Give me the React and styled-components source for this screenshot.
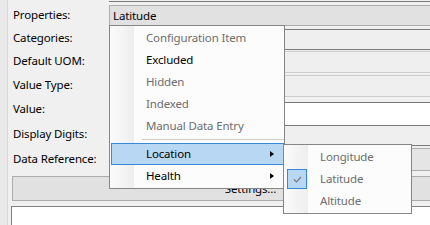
import React from 'react'
import styled, { createGlobalStyle } from 'styled-components'

const Global = createGlobalStyle`
  body {
    margin: 0;
    overflow: hidden;
    background: #f0f0f0;
    font-family: "Noto Sans", "Open Sans", sans-serif;
    font-size: 11.5px;
    letter-spacing: -0.15px;
    color: #000;
  }
`

const Root = styled.div`
  position: relative;
  display: flex;
  width: 430px;
  height: 225px;
  overflow: hidden;
  background: #f0f0f0;
`
const Strip = styled.div`
  width: 7px;
  flex: none;
  background: #e9e9e9;
  border-right: 1px solid #d9d9d9;
`
const Panel = styled.div`
  flex: 1;
  min-width: 0;
  display: flex;
  flex-direction: column;
  padding-left: 5px;
`
const Row = styled.div`
  display: grid;
  grid-template-columns: 96px 1fr;
  align-items: center;
  height: ${p => p.$h}px;
  margin-top: ${p => p.$mt}px;
`
const Label = styled.span`
  white-space: nowrap;
  line-height: 14px;
  margin-bottom: ${p => p.$lift * 2}px;
`
const fieldKinds = {
  prev: 'border-bottom: 1px solid #7a7a7a; background: #efefef;',
  combo: 'border: 1px solid #adadad; background: #e1e1e1;',
  dis: 'border: 1px solid #7a7a7a; background: #efefef;',
  disCombo: 'border: 1px solid #cccccc; background: #efefef;',
  text: 'border: 1px solid #7a7a7a; background: #fff;',
  combo2: 'border: 1px solid #adadad; background: #e5e5e5;',
}
/* fields run on past the right edge of the window, so no right border */
const Field = styled.div`
  box-sizing: border-box;
  height: 100%;
  display: flex;
  align-items: center;
  padding-left: 3px;
  ${p => fieldKinds[p.$kind]}
  border-right: none;
`
const Button = styled.div`
  box-sizing: border-box;
  margin: 5px 0 0 -1px;
  height: 25px;
  padding: 0 0 1px 58px;
  border: 1px solid #adadad;
  border-right: none;
  background: #e1e1e1;
  display: flex;
  align-items: center;
  justify-content: center;
`
const Box = styled.div`
  margin: 5px 0 0 -2px;
  flex: 1;
  border: 1px solid #828282;
  border-width: 1px 0 0 1px;
  background: #fff;
`

const Menu = styled.div`
  position: absolute;
  box-sizing: border-box;
  left: ${p => p.$x}px;
  top: ${p => p.$y}px;
  width: ${p => p.$w}px;
  padding: 1px 0 1px 1px;
  border: 1px solid #868686;
  background: linear-gradient(to right, #fbfbfb 0, #eeeeee 24px, #fcfcfc 24px);
`
const SubMenu = styled(Menu)`
  left: 100%;
  top: 0;
  padding: 1px;
`
const Item = styled.div`
  position: relative;
  box-sizing: border-box;
  height: 22px;
  display: flex;
  align-items: center;
  padding: 0 0 1px 34px;
  color: ${p => (p.$off ? '#6d6d6d' : '#000')};
  border: 1px solid ${p => (p.$hot ? '#3a87d8' : 'transparent')};
  background: ${p => (p.$hot ? '#b8d7f3' : 'transparent')};
`
const Sep = styled.div`
  height: 1px;
  margin: 2px 0 3px 31px;
  background: #cfcfcf;
`
const Arrow = styled.span`
  position: absolute;
  right: 9px;
  top: 7px;
  width: 0;
  height: 0;
  border-top: 3.5px solid transparent;
  border-bottom: 3.5px solid transparent;
  border-left: 4px solid #000;
`
const Check = styled.span`
  position: absolute;
  left: 1px;
  top: 0;
  box-sizing: border-box;
  width: 20px;
  height: 20px;
  border: 1px solid #3a87d8;
  background: #b8d7f3;
  display: flex;
  align-items: center;
  justify-content: center;
`

const rows = [
  { label: '', kind: 'prev', h: 2, mt: 0, lift: 0 },
  { label: 'Properties:', kind: 'combo', h: 21, mt: 3, lift: 1, value: 'Latitude' },
  { label: 'Categories:', kind: 'dis', h: 21, mt: 3, lift: 2 },
  { label: 'Default UOM:', kind: 'disCombo', h: 22, mt: 1, lift: 1.5 },
  { label: 'Value Type:', kind: 'disCombo', h: 22, mt: 2, lift: 1.5 },
  { label: 'Value:', kind: 'text', h: 21, mt: 5, lift: 5 },
  { label: 'Display Digits:', kind: 'dis', h: 21, mt: 2, lift: 2 },
  { label: 'Data Reference:', kind: 'combo2', h: 23, mt: 2, lift: 1 },
]

export default function App() {
  return (
    <Root>
      <Global />
      <Strip />
      <Panel>
        {rows.map((r, i) => (
          <Row key={i} $h={r.h} $mt={r.mt}>
            <Label $lift={r.lift}>{r.label}</Label>
            <Field $kind={r.kind}>{r.value}</Field>
          </Row>
        ))}
        <Button>Settings...</Button>
        <Box />
      </Panel>

      <Menu $x={109} $y={25} $w={176}>
        <Item $off>Configuration Item</Item>
        <Item>Excluded</Item>
        <Item $off>Hidden</Item>
        <Item $off>Indexed</Item>
        <Item $off>Manual Data Entry</Item>
        <Sep />
        <Item $hot>
          Location
          <Arrow />
          <SubMenu $w={129}>
            <Item $off>Longitude</Item>
            <Item $off>
              <Check>
                <svg width="9" height="7" viewBox="0 0 9 7">
                  <polyline points="1,3.5 3.5,6 8,1" fill="none" stroke="#7a7a7a" strokeWidth="1.2" />
                </svg>
              </Check>
              Latitude
            </Item>
            <Item $off>Altitude</Item>
          </SubMenu>
        </Item>
        <Item>
          Health
          <Arrow />
        </Item>
      </Menu>
    </Root>
  )
}
